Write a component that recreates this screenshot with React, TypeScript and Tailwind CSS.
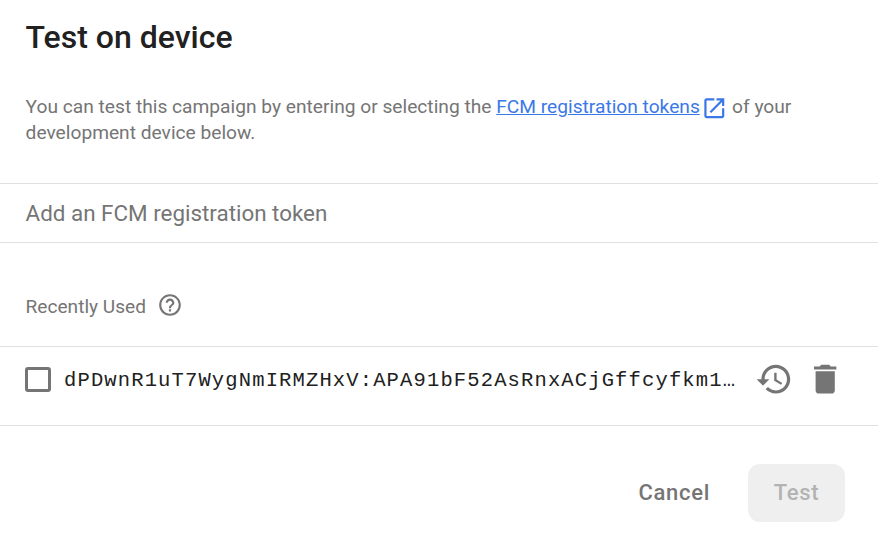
import React from 'react';

function Icon({ d, size, className = '' }: { d: string; size: number; className?: string }) {
  return (
    <svg viewBox="0 0 24 24" width={size} height={size} fill="currentColor" className={`shrink-0 ${className}`}>
      <path d={d} />
    </svg>
  );
}

const OPEN = 'M19 19H5V5h7V3H5c-1.11 0-2 .9-2 2v14c0 1.1.89 2 2 2h14c1.1 0 2-.9 2-2v-7h-2v7zM14 3v2h3.59l-9.83 9.83 1.41 1.41L19 6.41V10h2V3h-7z';
const HELP = 'M11 18h2v-2h-2v2zm1-16C6.48 2 2 6.48 2 12s4.48 10 10 10 10-4.48 10-10S17.52 2 12 2zm0 18c-4.41 0-8-3.59-8-8s3.59-8 8-8 8 3.59 8 8-3.59 8-8 8zm0-14c-2.21 0-4 1.79-4 4h2c0-1.1.9-2 2-2s2 .9 2 2c0 2-3 1.75-3 5h2c0-2.25 3-2.5 3-5 0-2.21-1.79-4-4-4z';
const HISTORY = 'M13 3c-4.97 0-9 4.03-9 9H1l3.89 3.89.07.14L9 12H6c0-3.87 3.13-7 7-7s7 3.13 7 7-3.13 7-7 7c-1.93 0-3.68-.79-4.94-2.06l-1.42 1.42C8.27 19.99 10.51 21 13 21c4.97 0 9-4.03 9-9s-4.03-9-9-9zm-1 5v5l4.28 2.54.72-1.21-3.5-2.08V8H12z';
const TRASH = 'M6 19c0 1.1.9 2 2 2h8c1.1 0 2-.9 2-2V7H6v12zM19 4h-3.5l-1-1h-5l-1 1H5v2h14V4z';

export default function App() {
  return (
    <main className="h-[542px] w-[878px] overflow-hidden bg-white font-['Roboto',sans-serif] text-[#757575]">
      <h1 className="h-[94px] pl-[25.6px] pt-[18px] text-[32px] leading-[38px] font-medium text-[#212121]">Test on device</h1>
      <p className="h-[89px] pl-[25.6px] text-[19.18px] leading-[26px]">
        You can test this campaign by entering or selecting the{' '}
        <a href="#" className="text-[#3b78e7] underline">FCM registration tokens</a>
        <Icon d={OPEN} size={26.6} className="-mt-1 mr-[-0.3px] -mb-1 ml-[1.2px] inline-block align-[-4.3px] text-[#3b78e7]" />
        {' '}of your
        <br />
        development device below.
      </p>
      <div className="flex h-[60px] items-center border-y border-[#e0e0e0] pt-[2px] pl-[25.6px] text-[22.4px]">Add an FCM registration token</div>
      <div className="flex h-[103px] items-center gap-[11px] pt-[24px] pl-[25.6px] text-[19.1px]">
        <span className="pt-px">Recently Used</span>
        <Icon d={HELP} size={26} className="mb-[3px] ml-[0.5px]" />
      </div>
      <div className="flex h-[80px] items-center border-y border-[#e0e0e0] pb-[13px] pl-[25px]">
        <span className="mb-px h-[25px] w-[26px] shrink-0 rounded-[3px] border-[3px] border-[#757575]" />
        <span className="ml-[13px] w-[691px] shrink-0 pt-[3px] font-['Liberation_Mono',monospace] text-[20.5px] tracking-[1.14px] whitespace-nowrap text-[#212121]">dPDwnR1uT7WygNmIRMZHxV:APA91bF52AsRnxACjGffcyfkm1…</span>
        <Icon d={HISTORY} size={38.4} className="mb-[1px]" />
        <Icon d={TRASH} size={38.4} className="mb-[1px] ml-[12.2px]" />
      </div>
      <div className="flex items-center justify-end gap-[38px] pt-[38px] pr-[33px] text-[22px] font-medium tracking-[0.7px]">
        <button className="pb-[2px]">Cancel</button>
        <button className="h-[58px] w-[97px] rounded-[12px] bg-[#efefef] pb-[2px] text-[#b3b3b3]">Test</button>
      </div>
    </main>
  );
}
